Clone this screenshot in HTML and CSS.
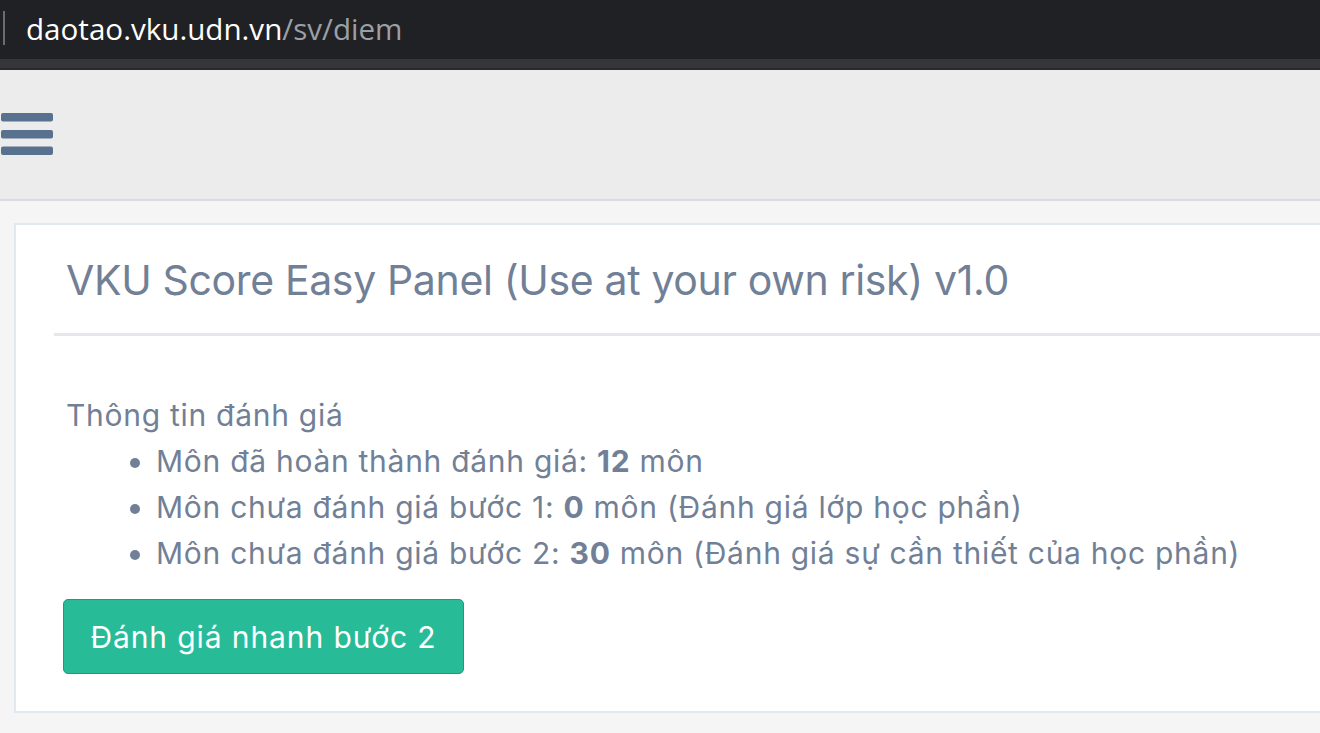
FILE: index.html
```html
<!DOCTYPE html>
<html lang="vi">
<head>
<meta charset="utf-8">
<title>VKU Score Easy Panel</title>
<link rel="stylesheet" href="styles.css">
</head>
<body>
<div class="browserbar">
  <span class="sep"></span>
  <span class="url"><span class="host">daotao.vku.udn.vn</span><span class="path">/sv/diem</span></span>
</div>
<div class="tabstrip"></div>
<nav class="topnav">
  <svg class="burger" width="52" height="43" viewBox="0 0 52 43">
    <rect x="0" y="0" width="52" height="8.5" rx="2"/>
    <rect x="0" y="17" width="52" height="8.5" rx="2"/>
    <rect x="0" y="33.5" width="52" height="8.5" rx="2"/>
  </svg>
</nav>
<main class="main">
  <section class="card">
    <header class="card-header">
      <h2 class="title">VKU Score Easy Panel (Use at your own risk) v1.0</h2>
    </header>
    <div class="card-body">
      <p class="label">Thông tin đánh giá</p>
      <ul class="stats">
        <li>Môn đã hoàn thành đánh giá: <b>12</b> môn</li>
        <li>Môn chưa đánh giá bước 1: <b>0</b> môn (Đánh giá lớp học phần)</li>
        <li>Môn chưa đánh giá bước 2: <b>30</b> môn (Đánh giá sự cần thiết của học phần)</li>
      </ul>
      <button class="btn">Đánh giá nhanh bước 2</button>
    </div>
  </section>
</main>
</body>
</html>
```

FILE: styles.css
```css
html, body {
  margin: 0;
  padding: 0;
}
body {
  width: 1320px;
  height: 733px;
  overflow: hidden;
  font-family: Inter, "Noto Sans", sans-serif;
  background: #f5f5f5;
}
.browserbar {
  height: 59px;
  background: #202124;
  display: flex;
  align-items: center;
}
.sep {
  width: 2px;
  height: 34px;
  background: #6b6c6e;
  margin-left: 3px;
  margin-top: -4px;
}
.url {
  margin-left: 21px;
  margin-top: -3px;
  font-family: "Open Sans", "Noto Sans", sans-serif;
  font-size: 29.6px;
}
.host { color: #ffffff; }
.path { color: #9aa0a6; }
.tabstrip {
  height: 9px;
  background: #35363a;
  border-bottom: 2px solid #2a2a2d;
}
.topnav {
  height: 129px;
  background: #ececec;
  border-bottom: 2px solid #d9dde3;
  display: flex;
  align-items: flex-start;
}
.burger {
  margin-left: 1px;
  margin-top: 43px;
  fill: #58718f;
}
.main {
  padding: 22px 0 0 14px;
  height: 510px;
}
.card {
  background: #ffffff;
  border: 2px solid #e2e8f0;
  border-right: none;
  height: 486px;
  padding-left: 38px;
}
.card-header {
  padding: 24px 0 21px 0;
  border-bottom: 3px solid #e4e7ec;
}
.title {
  margin: 0;
  padding-left: 12px;
  font-size: 41px;
  letter-spacing: -0.35px;
  line-height: 63px;
  font-weight: 400;
  color: #718096;
}
.card-body {
  padding: 56px 0 0 12px;
  color: #718096;
  font-size: 30px;
  letter-spacing: 0.72px;
  line-height: 46px;
}
.label {
  margin: 0;
}
.stats {
  margin: 0;
  padding-left: 90px;
}
.stats b {
  font-weight: 700;
}
.btn {
  margin: 23px 0 0 -3px;
  width: 401px;
  height: 75px;
  background: #27bb98;
  border: 1px solid #1a9c7e;
  border-radius: 5px;
  color: #ffffff;
  font-family: Inter, "Noto Sans", sans-serif;
  font-size: 30px;
  letter-spacing: 0.9px;
  padding: 0;
}
```
